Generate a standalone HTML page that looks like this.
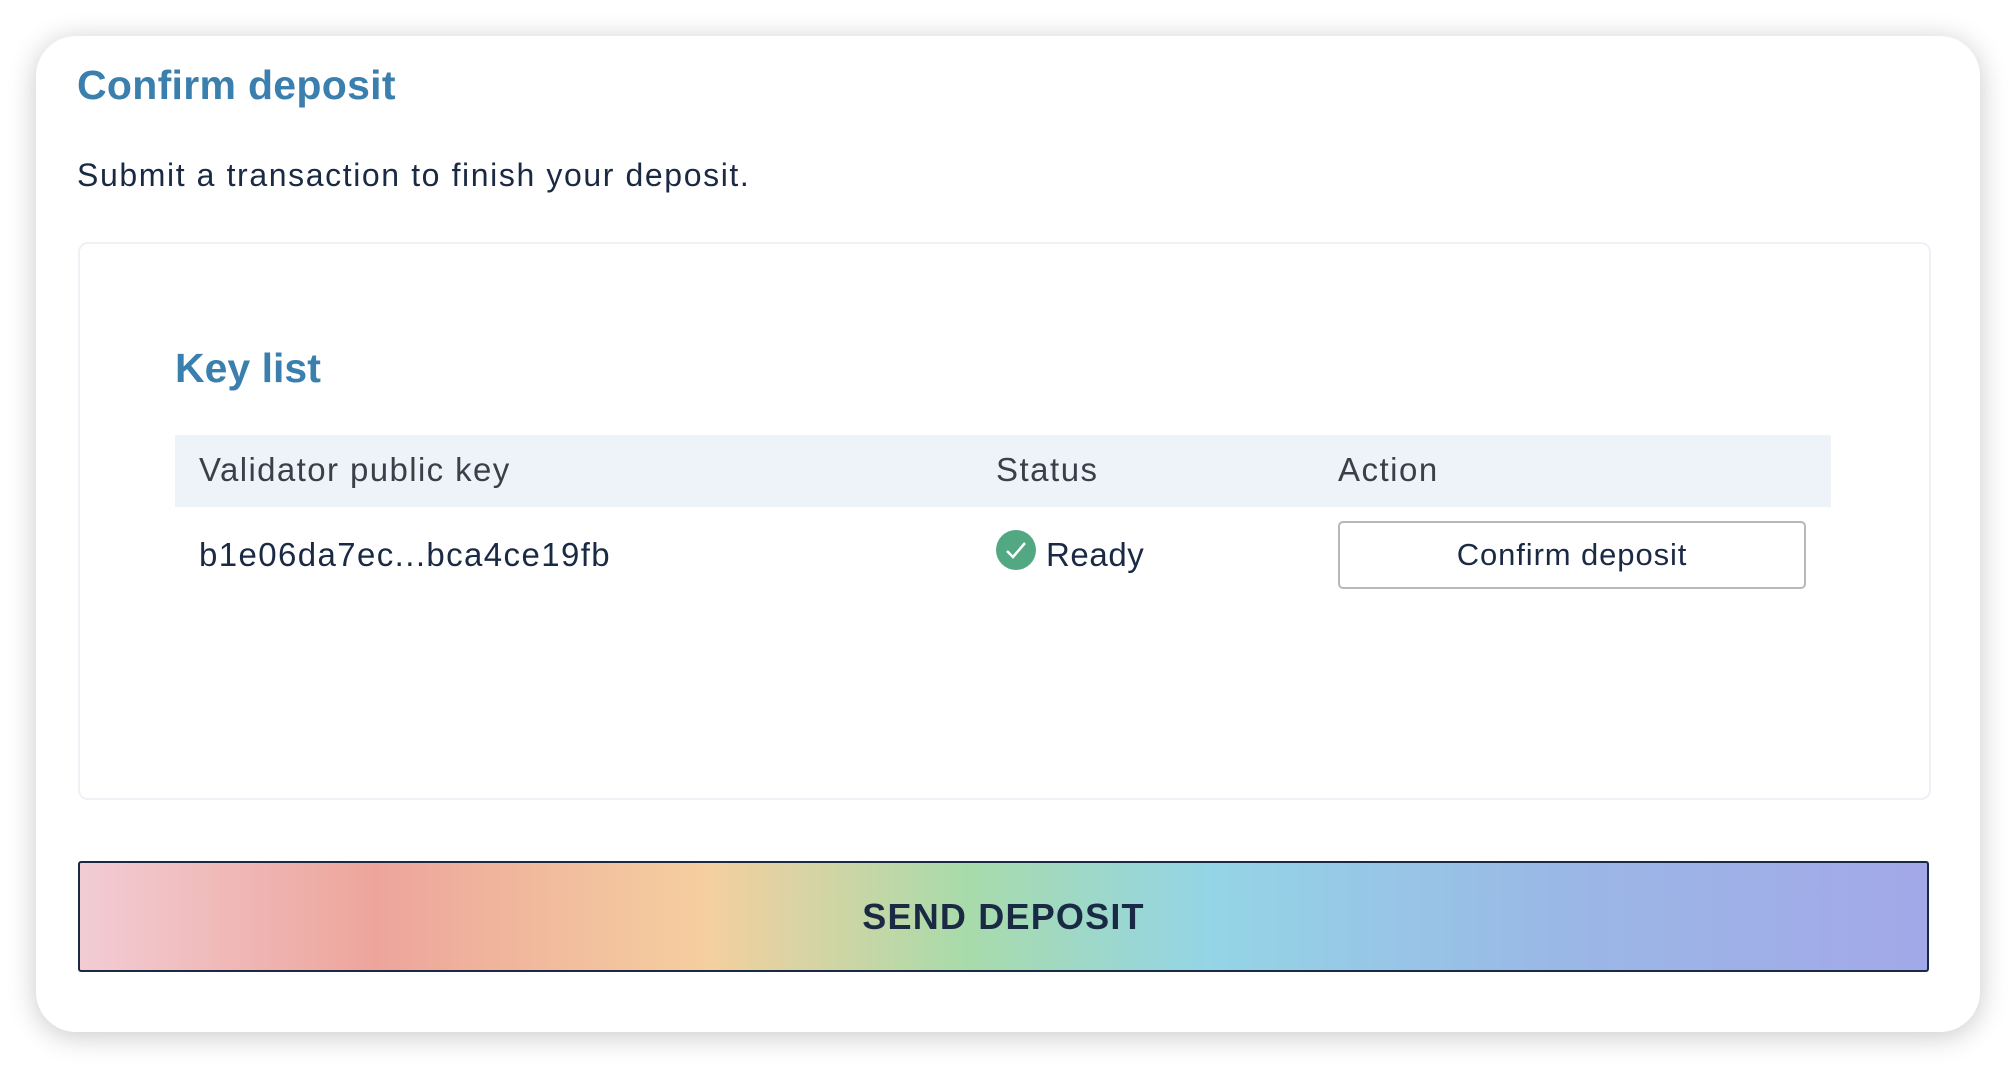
<!DOCTYPE html>
<html><head><meta charset="utf-8"><style>
html,body{margin:0;padding:0;width:2016px;height:1068px;background:#fff;overflow:hidden;font-family:"Liberation Sans",sans-serif;}
.card{position:absolute;left:36px;top:36px;width:1944px;height:996px;background:#fff;border-radius:40px;box-shadow:0 4px 28px rgba(0,0,0,0.22);}
.t{position:absolute;white-space:nowrap;}
</style></head><body>
<div class="card"></div>
<div class="t" style="left:77px;top:62px;font-size:41px;font-weight:bold;color:#3a7fad;letter-spacing:0.3px;">Confirm deposit</div>
<div class="t" style="left:77px;top:157px;font-size:32px;color:#1b2a44;letter-spacing:1.6px;">Submit a transaction to finish your deposit.</div>
<div style="position:absolute;left:78px;top:242px;width:1849px;height:554px;border:2px solid #eef1f5;border-radius:10px;"></div>
<div class="t" style="left:175px;top:345px;font-size:41px;font-weight:bold;color:#3a7fad;">Key list</div>
<div style="position:absolute;left:175px;top:435px;width:1656px;height:72px;background:#eef2f9;"></div>
<div class="t" style="left:199px;top:451px;font-size:33px;color:#3a3f4a;letter-spacing:1.4px;">Validator public key</div>
<div class="t" style="left:996px;top:451px;font-size:33px;color:#3a3f4a;letter-spacing:1.5px;">Status</div>
<div class="t" style="left:1338px;top:451px;font-size:33px;color:#3a3f4a;letter-spacing:1.5px;">Action</div>
<div class="t" style="left:199px;top:536px;font-size:33px;color:#1b2a44;letter-spacing:1.4px;">b1e06da7ec...bca4ce19fb</div>
<svg style="position:absolute;left:996px;top:530px" width="40" height="40" viewBox="0 0 40 40"><circle cx="20" cy="20" r="20" fill="#52a882"/><path d="M11 21 L17 27 L29 13" fill="none" stroke="#fff" stroke-width="2.5"/></svg>
<div class="t" style="left:1046px;top:536px;font-size:33px;color:#1b2a44;letter-spacing:0.6px;">Ready</div>
<div style="position:absolute;left:1338px;top:521px;width:464px;height:64px;border:2px solid #b8b8b8;border-radius:5px;text-align:center;line-height:64px;font-size:31px;color:#1b2a44;letter-spacing:0.9px;">Confirm deposit</div>
<div style="position:absolute;left:78px;top:861px;width:1847px;height:107px;border:2px solid #1b2a44;border-radius:3px;background:linear-gradient(90deg,#f2ccd4 0%,#eda59b 16%,#f5cf9f 34%,#a8dbaa 48%,#94d5e6 61%,#9ab8e6 80%,#a3a8e8 100%);text-align:center;line-height:107px;font-size:36px;font-weight:bold;letter-spacing:1.2px;color:#1b2a44;">SEND DEPOSIT</div>
</body></html>
